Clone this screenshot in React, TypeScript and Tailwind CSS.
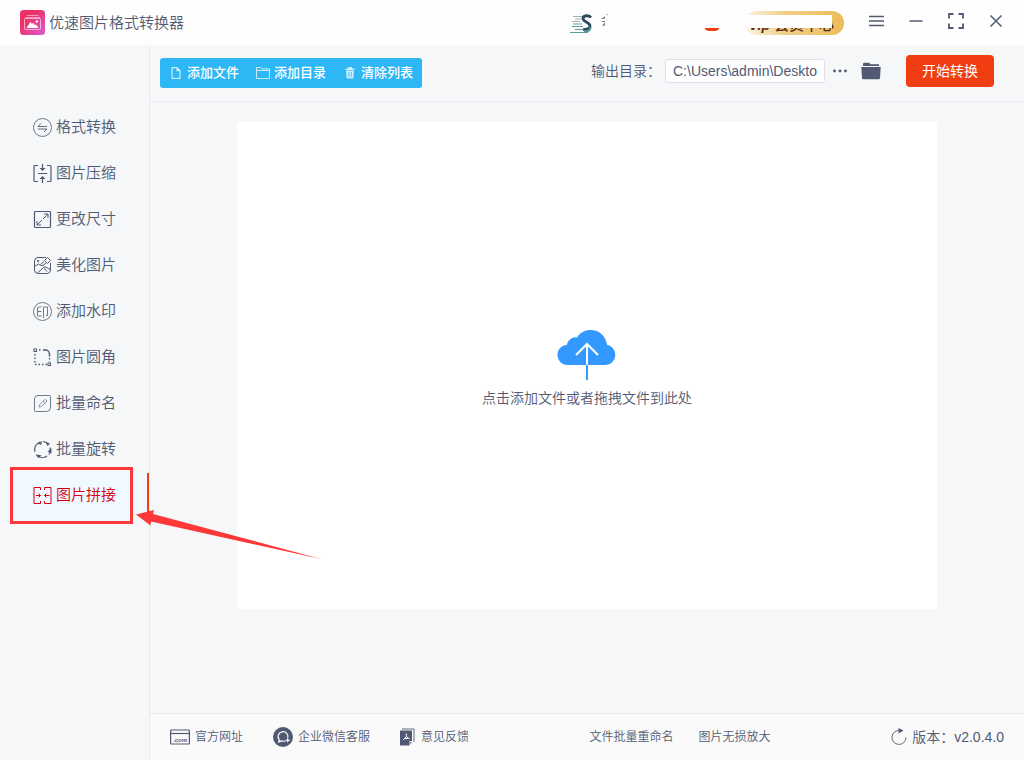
import type { ReactNode } from "react";

const FONT =
  "font-['Liberation_Sans','Noto_Sans_CJK_SC',sans-serif] font-[350]";

type Item = { label: string; icon: ReactNode };

function Icon({ children }: { children: ReactNode }) {
  return (
    <svg
      viewBox="0 0 20 20"
      fill="none"
      stroke="currentColor"
      strokeWidth="1"
      className="size-5 shrink-0"
      aria-hidden="true"
    >
      {children}
    </svg>
  );
}

const NAV: Item[] = [
  {
    label: "格式转换",
    icon: (
      <Icon>
        <circle cx="10.5" cy="10.5" r="9" strokeWidth="0.8" />
        <path d="M15 9.500H6l3-3M6 12h9l-3 3" strokeWidth="0.9" />
      </Icon>
    ),
  },
  {
    label: "图片压缩",
    icon: (
      <Icon>
        <path d="M6 2.500H3a1 1 0 00-1 1v14a1 1 0 001 1h3M15 2.500h3a1 1 0 011 1v14a1 1 0 01-1 1h-3" strokeWidth="1.200" />
        <path d="M6 10.500h9M10.500 1v6M10.500 20v-6" strokeWidth="1.200" />
        <path d="M7.500 5l3 3 3-3zM7.500 16l3-3 3 3z" fill="currentColor" stroke="none" />
      </Icon>
    ),
  },
  {
    label: "更改尺寸",
    icon: (
      <Icon>
        <rect x="2.500" y="2.500" width="16" height="16" rx="1" strokeWidth="1.200" />
        <path d="M12 5h4v4M16 5l-5 5M9 16H5v-4M5 16l5-5" />
      </Icon>
    ),
  },
  {
    label: "美化图片",
    icon: (
      <Icon>
        <path d="M14 2.500H6A3.500 3.500 0 002.500 6v9A3.500 3.500 0 006 18.500h9a3.500 3.500 0 003.500-3.500V8" />
        <path d="M2.500 11.500l4-2.500 2 1.500M5.500 18l6-5.500 1.500-.8 5.500 3M11.500 12.500l3.500 4" />
        <path d="M15.500 2.500l3 3-3 3-3-3zM12 6.500l-3.500 3 1.500 1.500 4-3" />
        <circle cx="6" cy="6" r=".8" />
      </Icon>
    ),
  },
  {
    label: "添加水印",
    icon: (
      <Icon>
        <circle cx="10.500" cy="10.500" r="9" strokeWidth="0.800" />
        <path d="M9.500 5.500L5.500 6.500v8.500h4M5.500 10.500h4M11.500 17V6h4v8.500h-1.500" strokeWidth="0.800" />
      </Icon>
    ),
  },
  {
    label: "图片圆角",
    icon: (
      <Icon>
        <rect x="2" y="2" width="2.500" height="2.500" />
        <rect x="16" y="16" width="2.500" height="2.500" />
        <path d="M7 3h3M3 7v10M3 17.500h12M17.500 11v4" strokeWidth="1.400" strokeDasharray="1.500 2" />
        <path d="M11 3h2.500a4 4 0 014 4v2.500" strokeWidth="1.500" />
      </Icon>
    ),
  },
  {
    label: "批量命名",
    icon: (
      <Icon>
        <path d="M6 2.500h11.500a1 1 0 011 1v11a4 4 0 01-4 4h-11a1 1 0 01-1-1V6A3.500 3.500 0 016 2.500z" strokeWidth="0.800" />
        <path d="M7.500 12l4.800-5a1.200 1.200 0 012 2L9.500 13.500l-2.500.500zM11.500 8l1.800 1.800" strokeWidth="0.600" />
      </Icon>
    ),
  },
  {
    label: "批量旋转",
    icon: (
      <Icon>
        <path d="M8 3a8 8 0 00-5 10M5 16.500a8 8 0 0010 .5M17 15.500a8 8 0 001-7M16 5a8 8 0 00-5-2.500" strokeWidth="1.200" />
        <path d="M5.500 4.500l4.500-2.500-1 4zM3.500 15.500l6 .7-3 2.800zM19.500 14.500l-4-2 4-3zM13.500 3l4.500 1.500-2.500 2.500z" fill="currentColor" stroke="none" />
      </Icon>
    ),
  },
  {
    label: "图片拼接",
    icon: (
      <Icon>
        <path d="M8.500 5V2.500H2v16h6.500V16M12.500 5V2.500H19v16h-6.500V16" />
        <path d="M4 10.500h4.500M6.500 8.500l2 2-2 2M17.500 10.500h-5M14.500 8.500l-2 2 2 2" />
      </Icon>
    ),
  },
];

const ACTIONS: Item[] = [
  {
    label: "添加文件",
    icon: (
      <svg viewBox="0 0 10 12" className="h-3 w-2.5" fill="none" stroke="currentColor" strokeWidth="1.2" aria-hidden="true">
        <path d="M1 .6h5l3 3v7.800H1zM6 .6v3h3" />
      </svg>
    ),
  },
  {
    label: "添加目录",
    icon: (
      <svg viewBox="0 0 14 12" className="h-3 w-3.5" fill="none" stroke="currentColor" strokeWidth="1" aria-hidden="true">
        <path d="M.5 .5h4.500l1 1.500h7.500v9.500H.5zM.5 3.500h13" />
      </svg>
    ),
  },
  {
    label: "清除列表",
    icon: (
      <svg viewBox="0 0 10 12" className="h-3 w-2.5" fill="currentColor" aria-hidden="true">
        <path d="M3 0h4v1.500h2.500v1.500h-9V1.500H3zM1 3.500h8l-.6 8H1.600z" />
        <path d="M3.500 5v5M5 5v5M6.500 5v5" stroke="#2db7f5" strokeWidth=".5" />
      </svg>
    ),
  },
];

const LINKS: Item[] = [
  {
    label: "官方网址",
    icon: (
      <svg viewBox="0 0 20 16" className="h-4 w-5" fill="none" stroke="currentColor" strokeWidth="1.200" aria-hidden="true">
        <rect x=".6" y="1" width="18.800" height="14" rx=".8" />
        <path d="M.6 4.500h18.800" />
        <text x="10" y="13" textAnchor="middle" fontSize="6" fontWeight="700" fill="currentColor" stroke="none">.com</text>
      </svg>
    ),
  },
  {
    label: "企业微信客服",
    icon: (
      <svg viewBox="0 0 20 20" className="size-5" aria-hidden="true">
        <circle cx="10" cy="10" r="10" fill="currentColor" />
        <path d="M12.500 13.700a5.500 5 0 01-4.500.2l-2.200 1 .5-2.200a5 4.800 0 118.500-1.700" fill="none" stroke="#fff" strokeWidth="1.200" />
        <path d="M14.700 10.800l.8 1.700 1.700.8-1.700.8-.8 1.700-.8-1.700-1.700-.8 1.700-.8z" fill="#fff" />
      </svg>
    ),
  },
  {
    label: "意见反馈",
    icon: (
      <svg viewBox="0 0 16 18" className="h-4.5 w-4" aria-hidden="true">
        <path d="M0 2.500h12v10.500h-2.500v4.500H0zM10.300 14h1.700l-1.700 2.500z" fill="currentColor" />
        <path d="M2 1H14V14" fill="none" stroke="currentColor" strokeWidth=".9" />
        <path d="M6.300 5.500v3L3.300 12M6.300 8.500l3.500 2.500M4.500 10.500h3.500" fill="none" stroke="#fff" strokeWidth="1" />
      </svg>
    ),
  },
];

function AppLogo() {
  return (
    <svg viewBox="0 0 25 25" className="size-[25px]" aria-hidden="true">
      <defs>
        <linearGradient id="logo" x1="0" y1="0" x2="1" y2="1">
          <stop offset=".3" stopColor="#ee3164" />
          <stop offset="1" stopColor="#dc5bd0" />
        </linearGradient>
      </defs>
      <rect width="25" height="25" rx="3.500" fill="url(#logo)" />
      <path d="M7 5.500h11.500M5.500 7.500h14.500" stroke="#fff" strokeOpacity=".5" />
      <rect x="4.500" y="8.500" width="16" height="11" rx="1" fill="none" stroke="#fff" strokeOpacity=".6" />
      <path d="M6.500 18l4-6 1.500 2 1.200-1.300 1.800 2.500 1-.8 2.500 3.600z" fill="#fff" />
      <circle cx="16.800" cy="11.500" r="1.200" fill="#fff" />
    </svg>
  );
}

function Avatar() {
  return (
    <svg viewBox="0 0 24 24" className="size-6 shrink-0" fill="none" aria-hidden="true">
      <path d="M4 5.500h9M6 8h6M3 10.500h8" stroke="#8b9da6" strokeWidth=".8" />
      <path d="M22 6.500c-2-2.500-8-2.500-8 1s7 3.500 7 7.500c0 2.500-3 3.500-7 3.500" stroke="#2c4a5a" strokeWidth="2.800" />
      <path d="M4 13h9M3 15.500h11M6 18.500h9M1 21.500h18" stroke="#5d9c9d" strokeWidth="1.200" />
      <path d="M15 20.500c3.500 0 6.500-1.500 6.500-4.500" stroke="#4f9294" strokeWidth="2.200" />
    </svg>
  );
}

function WindowButton({ label, children }: { label: string; children: ReactNode }) {
  return (
    <button type="button" aria-label={label}>
      <svg viewBox="0 0 16 16" className="size-4" fill="none" stroke="currentColor" strokeWidth="1.500" aria-hidden="true">
        {children}
      </svg>
    </button>
  );
}

function TitleBar() {
  return (
    <header className="flex h-[45px] items-center bg-[#fefefe] px-5">
      <AppLogo />
      <h1 className="ml-1 text-[15px] leading-5">优速图片格式转换器</h1>

      <div className="relative ml-auto flex h-6 items-center">
        <Avatar />
        <span className="ml-2 w-[103px] pb-1 text-xs">会</span>
        <span className="h-4 w-4 rounded-[5px] bg-[#f03e12]" />
        <button
          type="button"
          className="ml-[25px] flex h-6 w-[99px] items-end justify-end rounded-full bg-linear-to-r from-[#fdf3dd] via-[#f0cf8a] via-40% to-[#edbb58] pr-2.5 text-[15px] leading-5 font-medium text-[#5a2a12]"
        >
          <i className="mr-1 text-sm leading-5 font-bold">Vip</i>会员中心
        </button>
        <span className="absolute top-1 right-3 left-9 h-[13px] bg-[#fefefe]" />
      </div>

      <div className="ml-6 flex items-center gap-6 pb-1">
        <WindowButton label="菜单">
          <path d="M1 3.500h15M1 8h15M1 12.500h15" />
        </WindowButton>
        <WindowButton label="最小化">
          <path d="M1.500 8h13" />
        </WindowButton>
        <WindowButton label="最大化">
          <path d="M1 5.500V1h4.500M10.500 1H15v4.500M15 10.500V15h-4.500M5.500 15H1v-4.500" strokeWidth="1.800" />
        </WindowButton>
        <WindowButton label="关闭">
          <path d="M2.500 2.500l11 11M13.500 2.500l-11 11" />
        </WindowButton>
      </div>
    </header>
  );
}

// Callout frame, active marker and arrow that sit over the highlighted row.
function Callout() {
  return (
    <>
      <span className="absolute top-px right-0 h-10 w-4 border-r-2 border-[#f03e12] bg-[#f0f9ff]" />
      <span className="absolute -top-[5px] right-4 left-2.5 h-[57px] border-3 border-[#fd3838] bg-[#f0f9ff]" />
      <svg viewBox="0 0 186 50" className="absolute top-[37px] left-[135px] z-10 h-[50px] w-[186px]" aria-hidden="true">
        <path d="M1 5.500L19 1l-1 4L186 50 16 12.500l-.5 4z" fill="#fd3838" />
      </svg>
    </>
  );
}

function Sidebar() {
  return (
    <nav className="w-[150px] shrink-0 border-r border-[#e9ebee] pt-[59px]">
      <ul>
        {NAV.map((item) => {
          const active = item.label === "图片拼接";
          return (
            <li key={item.label} className="relative">
              {active && <Callout />}
              <a
                href="#"
                aria-current={active ? "page" : undefined}
                className={`relative flex h-[46px] items-center gap-1 pl-8 text-[15px] ${active ? "text-[#cf000c]" : ""}`}
              >
                {item.icon}
                {item.label}
              </a>
            </li>
          );
        })}
      </ul>
    </nav>
  );
}

function Toolbar() {
  return (
    <div className="flex h-[57px] shrink-0 items-center border-b border-[#e9ebee] px-2.5">
      <div className="flex h-[30px] items-center gap-[17px] rounded-[3px] bg-[#2db7f5] px-[9px] text-white">
        {ACTIONS.map((action) => (
          <button key={action.label} type="button" className="flex items-center gap-1 text-[13px] font-medium">
            <span className="flex w-3.5 justify-center opacity-75">{action.icon}</span>
            {action.label}
          </button>
        ))}
      </div>

      <div className="mr-5 ml-auto flex items-center pb-1">
        <label htmlFor="output" className="text-sm">
          输出目录：
        </label>
        <input
          id="output"
          defaultValue="C:\Users\admin\Deskto"
          className="ml-1 h-6 w-40 rounded-[3px] border border-[#dcdfe6] bg-white px-[7px] text-sm"
        />
        <button type="button" aria-label="浏览" className="ml-[7px]">
          <svg viewBox="0 0 16 4" className="h-1 w-4" fill="currentColor" aria-hidden="true">
            <circle cx="2.500" cy="2" r="1.400" />
            <circle cx="8" cy="2" r="1.400" />
            <circle cx="13.500" cy="2" r="1.400" />
          </svg>
        </button>
        <button type="button" aria-label="打开目录" className="ml-[13px]">
          <svg viewBox="0 0 20 18" className="h-[18px] w-5" fill="currentColor" aria-hidden="true">
            <path d="M2 4V1.500L3 .8h5l1.500 1.500H18V4z" />
            <path d="M.3 5h19.400L19 16.500l-1 .8H2l-1-.8z" />
          </svg>
        </button>
        <button
          type="button"
          className="ml-[25px] h-8 w-[88px] rounded bg-[#f03e12] text-sm font-normal text-white"
        >
          开始转换
        </button>
      </div>
    </div>
  );
}

function DropZone() {
  return (
    <button
      type="button"
      className="flex w-4/5 flex-1 flex-col items-center justify-center gap-2 bg-white pt-1 text-sm"
    >
      <svg viewBox="0 0 60 52" className="h-[52px] w-[60px]" fill="none" aria-hidden="true">
        <path
          d="M11 37a10 10 0 01-1-20.300A8.500 8.500 0 0120 9.500C23 4.500 28 2 33.500 2 42 2 49 8 50 16.800A10.200 10.200 0 0149 37z"
          fill="#3399ff"
        />
        <path d="M30 37V16M19 27l11-11 11 11" stroke="#fff" strokeWidth="2" />
        <path d="M30 37v15" stroke="#3399ff" strokeWidth="2" />
      </svg>
      点击添加文件或者拖拽文件到此处
    </button>
  );
}

function Footer() {
  return (
    <footer className="flex h-[47px] shrink-0 items-center justify-between border-t border-[#e9ebee] bg-[#fafafa] px-5 text-xs">
      <div className="flex items-center gap-[30px]">
        {LINKS.map((link) => (
          <a key={link.label} href="#" className="flex items-center gap-[5px]">
            {link.icon}
            {link.label}
          </a>
        ))}
      </div>
      <div className="flex gap-[25px]">
        <a href="#">文件批量重命名</a>
        <a href="#">图片无损放大</a>
      </div>
      <div className="flex items-center gap-[5px] text-sm">
        <svg viewBox="0 0 16 18" className="h-[18px] w-4" fill="none" stroke="currentColor" strokeWidth=".9" aria-hidden="true">
          <path d="M9 2.500A7 7 0 1015 9.500" />
          <path d="M7.500 0l5 2.500-5 3z" fill="currentColor" stroke="none" />
        </svg>
        版本：v2.0.4.0
      </div>
    </footer>
  );
}

export default function App() {
  return (
    <div className={`${FONT} flex min-h-screen flex-col bg-[#f5f7f9] text-[#515a72]`}>
      <TitleBar />
      <div className="flex flex-1">
        <Sidebar />
        <div className="flex min-w-0 flex-1 flex-col">
          <Toolbar />
          <main className="flex flex-1 flex-col items-center pt-5 pb-26">
            <DropZone />
          </main>
          <Footer />
        </div>
      </div>
    </div>
  );
}
